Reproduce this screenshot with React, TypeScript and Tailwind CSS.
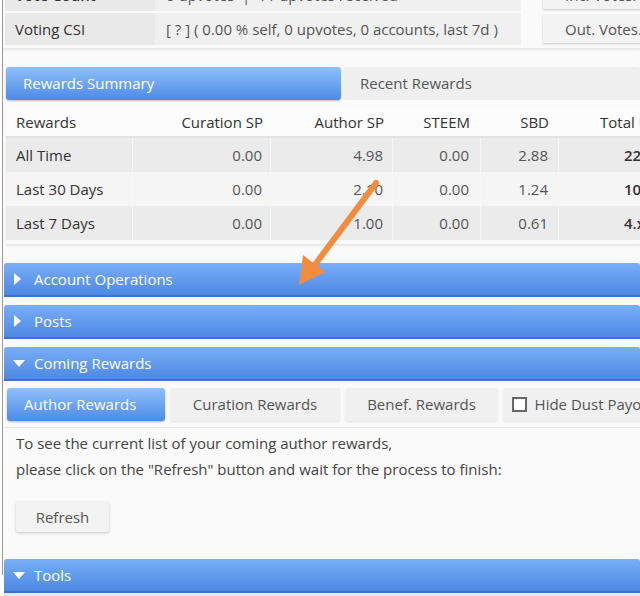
import { useState } from "react";

const font = { fontFamily: '"Open Sans", "Noto Sans", sans-serif' };

const rows = [
  { label: "All Time", cur: "0.00", auth: "4.98", steem: "0.00", sbd: "2.88", total: "22", dark: true },
  { label: "Last 30 Days", cur: "0.00", auth: "2.10", steem: "0.00", sbd: "1.24", total: "10", dark: false },
  { label: "Last 7 Days", cur: "0.00", auth: "1.00", steem: "0.00", sbd: "0.61", total: "4", dark: true },
];

const cols = "grid grid-cols-[127px_138px_122px_88px_78px_1fr]";

const Triangle = ({ open }: { open: boolean }) => (
  <svg width="12" height="12" viewBox="0 0 12 12" className="shrink-0">
    {open ? (
      <path d="M0 3 L12 3 L6 10 Z" fill="white" />
    ) : (
      <path d="M1 0 L8 6 L1 12 Z" fill="white" />
    )}
  </svg>
);

const Bar = ({ title, open }: { title: string; open?: boolean }) => (
  <div className="flex h-[34px] items-center gap-[9px] rounded-t-[3px] border-b-2 border-[#3d73c8] bg-gradient-to-b from-[#79aef8] to-[#4d88e2] pl-[9px] text-[15px] text-white">
    <Triangle open={!!open} />
    <span>{title}</span>
  </div>
);

export default function App() {
  const [tab, setTab] = useState(0);
  const [hideDust, setHideDust] = useState(false);

  return (
    <div className="relative h-[596px] w-[640px] overflow-hidden bg-white pl-[2px]" style={font}>
      <div className="h-full border-l border-[#9a9a9a] bg-[#fafafa] text-[#444]">
        {/* top info table, cut off */}
        <div className="-mt-[21px] flex flex-col gap-[2px] pl-[2px] pb-[3px] shadow-[0_2px_2px_rgba(0,0,0,0.08)]">
          <div className="flex h-[32px] items-center text-[15px]">
            <div className="flex h-full w-[150px] shrink-0 items-center bg-[#e9e9e9] pl-[10px] font-semibold text-[#333]">Vote Count</div>
            <div className="flex h-full w-[366px] shrink-0 items-center whitespace-nowrap bg-[#f0f0f0] pl-[11px] text-[#555]">
              0 upvotes&nbsp;&nbsp;|&nbsp;&nbsp;11 upvotes received
            </div>
            <div className="ml-[22px] flex h-[28px] w-[110px] shrink-0 items-center whitespace-nowrap bg-[#f3f3f3] pl-[22px] text-[#555] shadow-[0_1px_2px_rgba(0,0,0,0.2)]">Inc. Votes.</div>
          </div>
          <div className="flex h-[32px] items-center text-[15px]">
            <div className="flex h-full w-[150px] shrink-0 items-center bg-[#e9e9e9] pl-[10px] text-[#333]">Voting CSI</div>
            <div className="flex h-full w-[366px] shrink-0 items-center whitespace-nowrap bg-[#f0f0f0] pl-[11px] text-[#555]">
              [ ? ] ( 0.00 % self, 0 upvotes, 0 accounts, last 7d )
            </div>
            <div className="ml-[22px] flex h-[28px] w-[110px] shrink-0 items-center whitespace-nowrap bg-[#f3f3f3] pl-[22px] text-[#555] shadow-[0_1px_2px_rgba(0,0,0,0.2)]">Out. Votes.</div>
          </div>
        </div>

        {/* rewards tabs */}
        <div className="mt-[19px] flex gap-[2px] pl-[3px] text-[15px]">
          <button
            onClick={() => setTab(0)}
            className={`flex h-[33px] w-[335px] items-center rounded-[3px] pl-[17px] ${tab === 0 ? "bg-gradient-to-b from-[#8ec0fb] to-[#4d8ae6] text-white shadow-[0_1px_2px_rgba(0,0,0,0.25)]" : "bg-[#efefef] text-[#555]"}`}
          >
            Rewards Summary
          </button>
          <button
            onClick={() => setTab(1)}
            className={`flex h-[33px] flex-1 items-center rounded-[3px] pl-[17px] ${tab === 1 ? "bg-gradient-to-b from-[#8ec0fb] to-[#4d8ae6] text-white" : "bg-[#efefef] text-[#555]"}`}
          >
            Recent Rewards
          </button>
        </div>

        {/* rewards table */}
        <div className="mt-[9px] ml-[3px] pb-[4px] text-[15px] shadow-[0_2px_2px_rgba(0,0,0,0.08)]">
          <div className={`${cols} h-[29px] items-center border-b-2 border-[#e2e2e2] bg-[#fcfcfc] text-[#333]`}>
            <div className="pl-[10px]">Rewards</div>
            <div className="pr-[8px] text-right">Curation SP</div>
            <div className="pr-[9px] text-right">Author SP</div>
            <div className="pr-[11px] text-right">STEEM</div>
            <div className="pr-[10px] text-right">SBD</div>
            <div className="whitespace-nowrap pl-[41px]">Total USD</div>
          </div>
          {rows.map((r) => (
            <div key={r.label} className={`${cols} h-[34px] items-stretch ${r.dark ? "bg-[#ebebeb]" : "bg-[#f5f5f5]"}`}>
              <div className="flex items-center border-r border-[#f7f7f7] pl-[10px] text-[#333]">{r.label}</div>
              <div className="flex items-center justify-end border-r border-[#f7f7f7] pr-[8px] text-[#555]">{r.cur}</div>
              <div className="flex items-center justify-end border-r border-[#f7f7f7] pr-[9px] text-[#555]">{r.auth}</div>
              <div className="flex items-center justify-end border-r border-[#f7f7f7] pr-[11px] text-[#555]">{r.steem}</div>
              <div className="flex items-center justify-end border-r border-[#f7f7f7] pr-[10px] text-[#555]">{r.sbd}</div>
              <div className="flex items-center whitespace-nowrap pl-[65px] font-semibold text-[#333]">{r.total}.xx</div>
            </div>
          ))}
        </div>

        {/* sections */}
        <div className="mt-[19px] flex flex-col gap-[8px] pl-[1px]">
          <Bar title="Account Operations" />
          <Bar title="Posts" />
          <div>
            <Bar title="Coming Rewards" open />
            <div className="mt-[7px] flex gap-[5px] pl-[3px] text-[15px]">
              <div className="flex h-[33px] w-[158px] shrink-0 items-center rounded-[3px] bg-gradient-to-b from-[#8ec0fb] to-[#4d8ae6] pl-[17px] text-white shadow-[0_1px_2px_rgba(0,0,0,0.25)]">
                Author Rewards
              </div>
              <div className="flex h-[33px] w-[170px] shrink-0 items-center justify-center rounded-[3px] bg-[#f0f0f0] text-[#555] shadow-[0_1px_2px_rgba(0,0,0,0.1)]">
                Curation Rewards
              </div>
              <div className="flex h-[33px] w-[153px] shrink-0 items-center justify-center rounded-[3px] bg-[#f0f0f0] text-[#555] shadow-[0_1px_2px_rgba(0,0,0,0.1)]">
                Benef. Rewards
              </div>
              <label className="flex h-[33px] w-[160px] shrink-0 items-center gap-[8px] whitespace-nowrap rounded-[3px] bg-[#f0f0f0] pl-[9px] text-[#555] shadow-[0_1px_2px_rgba(0,0,0,0.1)]">
                <span
                  onClick={() => setHideDust(!hideDust)}
                  className={`h-[15px] w-[15px] border-2 border-[#666] ${hideDust ? "bg-[#4d8ae6]" : "bg-white"}`}
                />
                Hide Dust Payouts
              </label>
            </div>
            <div className="mt-[6px] h-px bg-[#e6e6e6]" />
            <div className="pl-[12px] pt-[2px] text-[15px] leading-[26px] text-[#444]">
              <p>To see the current list of your coming author rewards,</p>
              <p>please click on the "Refresh" button and wait for the process to finish:</p>
              <button className="mt-[20px] h-[30px] w-[93px] rounded-[2px] bg-[#f3f3f3] text-[#555] shadow-[0_1px_3px_rgba(0,0,0,0.22)]">
                Refresh
              </button>
            </div>
          </div>
          <div className="mt-[19px]">
            <Bar title="Tools" open />
            <div className="h-[6px] bg-[#dfe8f5]" />
          </div>
        </div>
      </div>

      {/* annotation arrow */}
      <svg className="pointer-events-none absolute left-0 top-0" width="640" height="596">
        <line x1="376" y1="183" x2="314" y2="266" stroke="#f28c3f" strokeWidth="6" strokeLinecap="round" />
        <path d="M299 285 L303 255 L325 272 Z" fill="#f28c3f" />
      </svg>
    </div>
  );
}
